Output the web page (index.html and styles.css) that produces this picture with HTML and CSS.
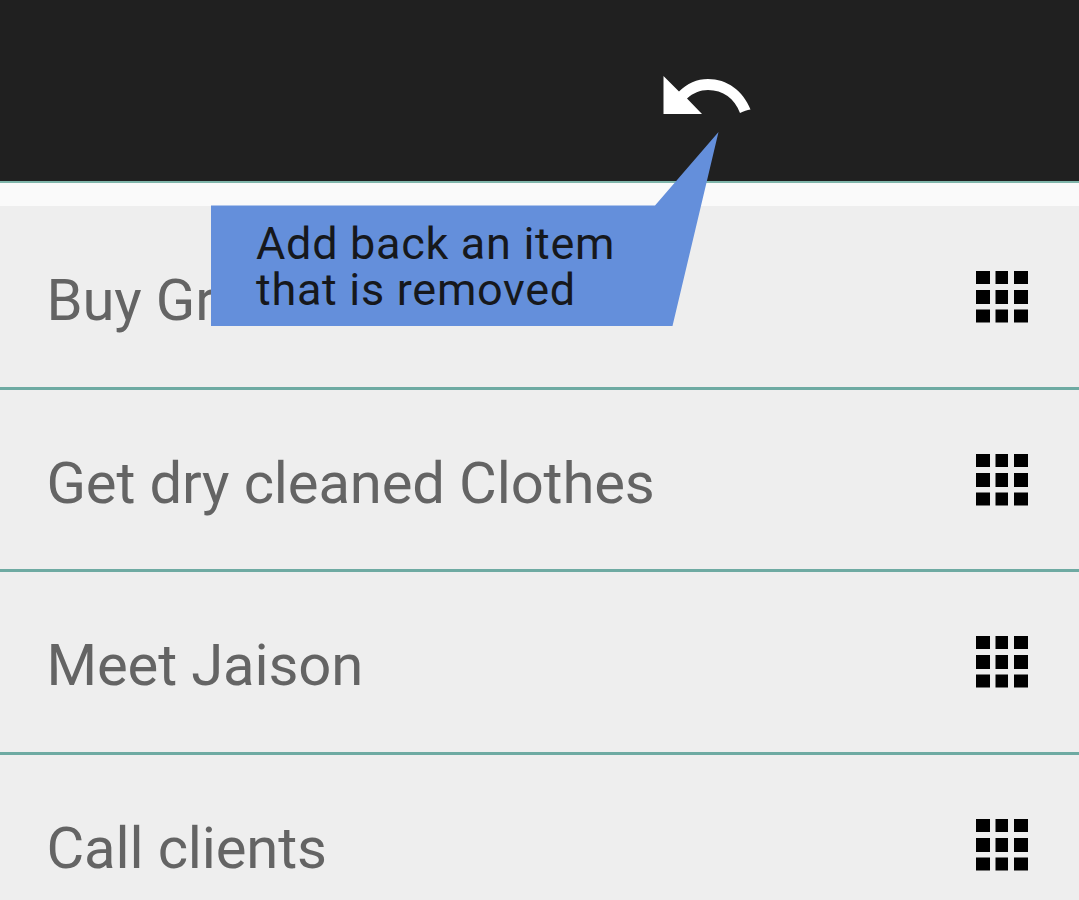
FILE: index.html
```html
<!DOCTYPE html>
<html>
<head>
    <meta charset="utf-8">
    <title>To Do List</title>
    <link rel="stylesheet" href="styles.css">
</head>
<body>
    <svg class="symbols">
        <symbol id="grip" viewBox="0 0 53 53">
            <path d="M0 0h14v13H0zM19.5 0H32v13H19.5zM38 0h14v13H38zM0 19h14v14H0zM19.5 19H32v14H19.5zM38 19h14v14H38zM0 38.5h14v13H0zM19.5 38.5H32v13H19.5zM38 38.5h14v13H38z"/>
        </symbol>
    </svg>

    <header>
        <button class="undo" aria-label="Undo">
            <svg width="88" height="40" viewBox="0 0 88 40">
                <path d="M0.5 0L16 15.500C24 7.500 34 3 45 3C64 3 80 14.500 87.500 33.500C84 34 81 35 77 37C71.500 22.500 60 14 45 14C37 14 30 17 24 22.500L39 38H0.500z"/>
            </svg>
        </button>
        <div class="tip">
            <svg class="tip-shape" width="508" height="194" viewBox="0 0 508 194">
                <path d="M0 73.500H444L507.500 0L461.500 194H0z"/>
            </svg>
            <p>Add back an item<br>that is removed</p>
        </div>
    </header>

    <ul class="list">
        <li>
            <span>Buy Gr</span>
            <svg class="grip"><use href="#grip"/></svg>
        </li>
        <li>
            <span>Get dry cleaned Clothes</span>
            <svg class="grip"><use href="#grip"/></svg>
        </li>
        <li>
            <span>Meet Jaison</span>
            <svg class="grip"><use href="#grip"/></svg>
        </li>
        <li>
            <span>Call clients</span>
            <svg class="grip"><use href="#grip"/></svg>
        </li>
    </ul>
</body>
</html>
```
FILE: styles.css
```css
* {
    margin: 0;
    padding: 0;
    box-sizing: border-box;
}

body {
    background: #fafafa;
    height: 900px;
    overflow: hidden;
    font-family: Roboto, sans-serif;
}

.symbols {
    display: none;
}

header {
    position: relative;
    display: flex;
    justify-content: flex-end;
    height: 183px;
    padding: 76px 328px 0 0;
    background: #202020;
    border-bottom: 2px solid #7fb5aa;
}

.undo {
    width: 88px;
    height: 40px;
    background: none;
    border: none;
}

.undo svg {
    display: block;
    fill: #fff;
}

/* callout hanging below the undo button */
.tip {
    position: absolute;
    top: 132px;
    left: 211px;
    width: 508px;
    height: 194px;
    padding: 89px 0 0 45px;
    z-index: 1;
}

.tip-shape {
    position: absolute;
    top: 0;
    left: 0;
    fill: #648fdb;
}

.tip p {
    position: relative;
    color: #16181c;
    font-size: 45px;
    line-height: 46px;
    letter-spacing: 0.7px;
    white-space: nowrap;
}

.list {
    list-style: none;
    margin-top: 23px;
    padding-top: 1px;
    background: #eee;
}

.list li {
    display: flex;
    justify-content: space-between;
    align-items: center;
    height: 182.5px;
    padding: 2px 50px 0 46.5px;
    border-bottom: 3px solid #6eaaa2;
}

.list span {
    padding-top: 5px;
    color: #646464;
    font-size: 58px;
    line-height: 68px;
    letter-spacing: -0.15px;
}

.grip {
    width: 53px;
    height: 53px;
}
```
